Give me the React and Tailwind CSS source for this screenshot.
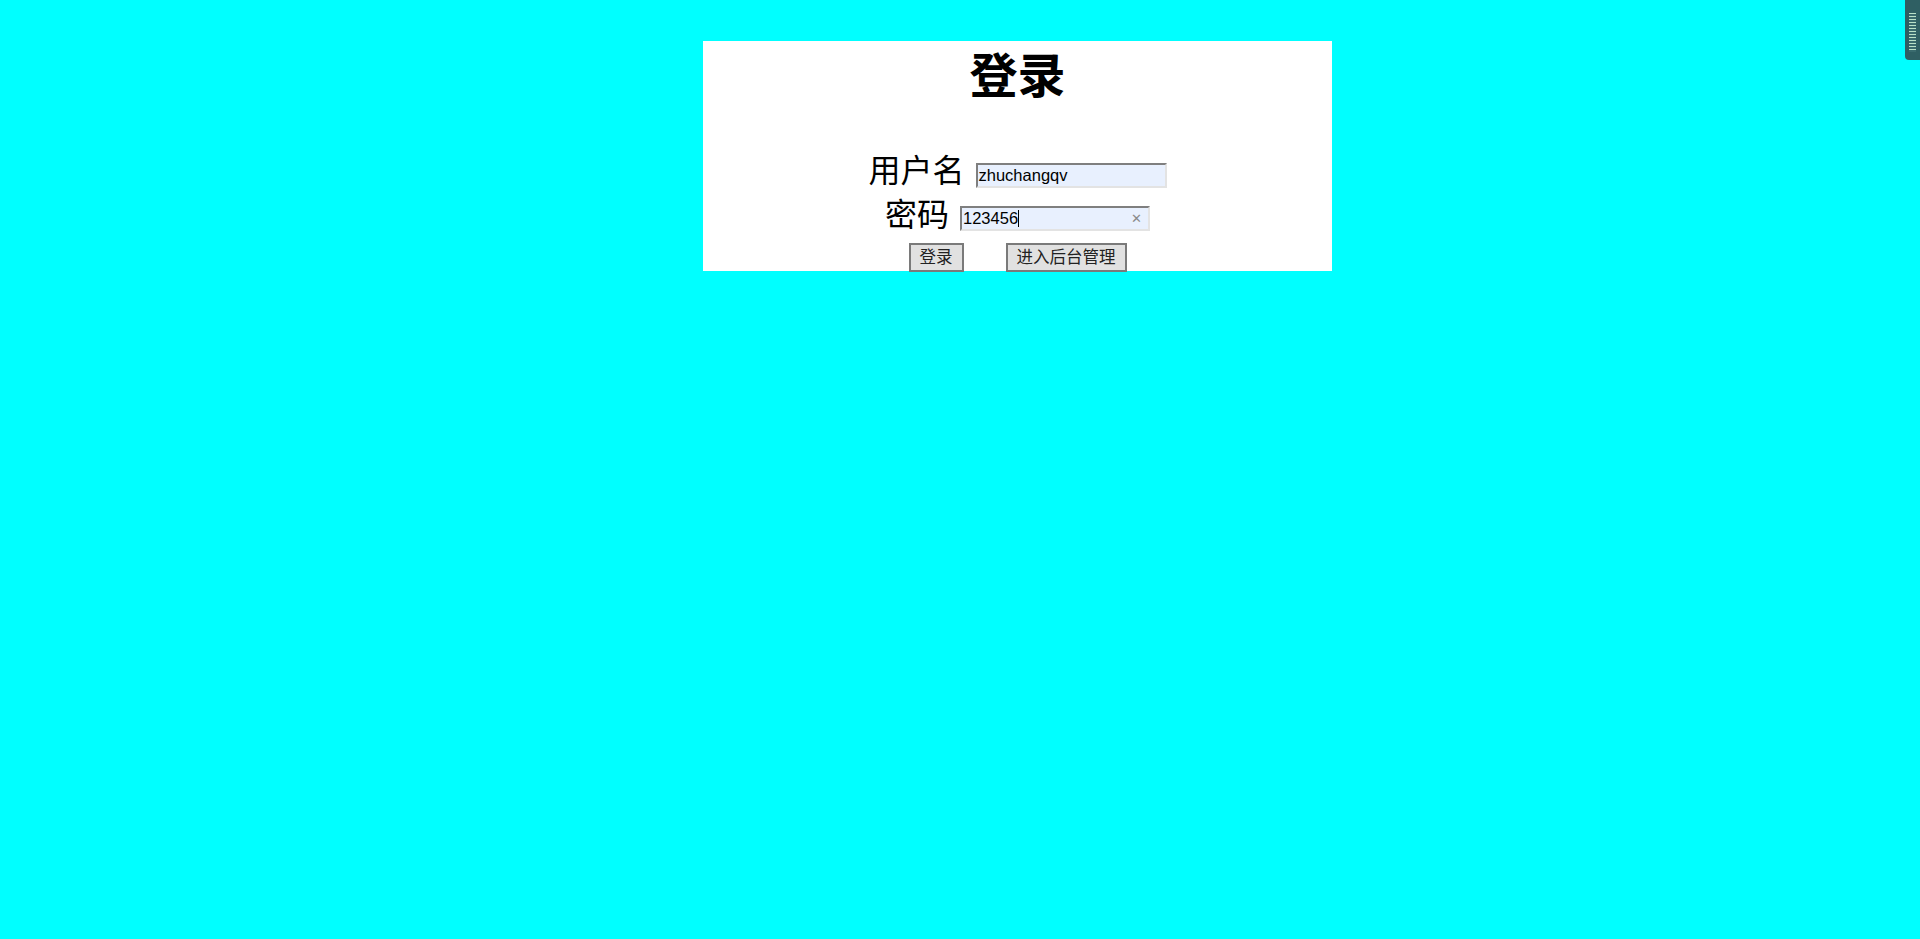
import React from "react";

const font = { fontFamily: '"Liberation Sans", Arial, "Noto Sans CJK SC", sans-serif' };

function Field({ value, width, clear }) {
  return (
    <div
      className={`flex items-center h-[25px] ${width} bg-[#e8f0fe] border-2 border-t-[#7f7f7f] border-l-[#7f7f7f] border-b-[#e3e3e3] border-r-[#e3e3e3] pl-[1px] pr-[6px] text-[16.5px] text-black leading-none`}
    >
      <span className="whitespace-nowrap">{value}</span>
      {clear && <span className="w-px h-[17px] bg-black" />}
      <span className="flex-1" />
      {clear && <span className="text-[13px] text-[#8a8a8a]">✕</span>}
    </div>
  );
}

function Btn({ children, className = "" }) {
  return (
    <button
      type="button"
      className={`h-[29px] px-[9px] bg-[#e1e1e1] border-2 border-[#7a7a7a] text-[16.5px] leading-none text-[#222] ${className}`}
    >
      {children}
    </button>
  );
}

export default function App() {
  return (
    <div className="relative min-h-screen w-full bg-[#00ffff] pt-[41px]" style={font}>
      <div className="ml-[703px] w-[629px] h-[230px] bg-white flex flex-col items-center">
        {/* 标题 */}
        <h1 className="mt-[12px] text-[48px] leading-[48px] font-bold text-black">登录</h1>

        {/* 用户名 */}
        <div className="mt-[52px] flex items-start gap-[11px]">
          <span className="text-[32px] leading-[36px] text-black">用户名</span>
          <div className="mt-[10px]">
            <Field value="zhuchangqv" width="w-[191px]" />
          </div>
        </div>

        {/* 密码 */}
        <div className="mt-[8px] flex items-start gap-[11px]">
          <span className="text-[32px] leading-[36px] text-black">密码</span>
          <div className="mt-[9px]">
            <Field value="123456" width="w-[190px]" clear />
          </div>
        </div>

        <div className="mt-[10px] flex items-center gap-[42px]">
          <Btn>登录</Btn>
          <Btn>进入后台管理</Btn>
        </div>
      </div>

      {/* 右上角小挂件 */}
      <div className="absolute top-0 right-0 w-[15px] h-[60px] bg-[#2f5f63] rounded-bl-[4px] flex justify-center pt-[13px]">
        <div className="w-[7px] h-[39px] bg-[repeating-linear-gradient(to_bottom,#b8e0c8_0px,#b8e0c8_1px,#3a6b6e_1px,#3a6b6e_3px)]" />
      </div>
    </div>
  );
}
